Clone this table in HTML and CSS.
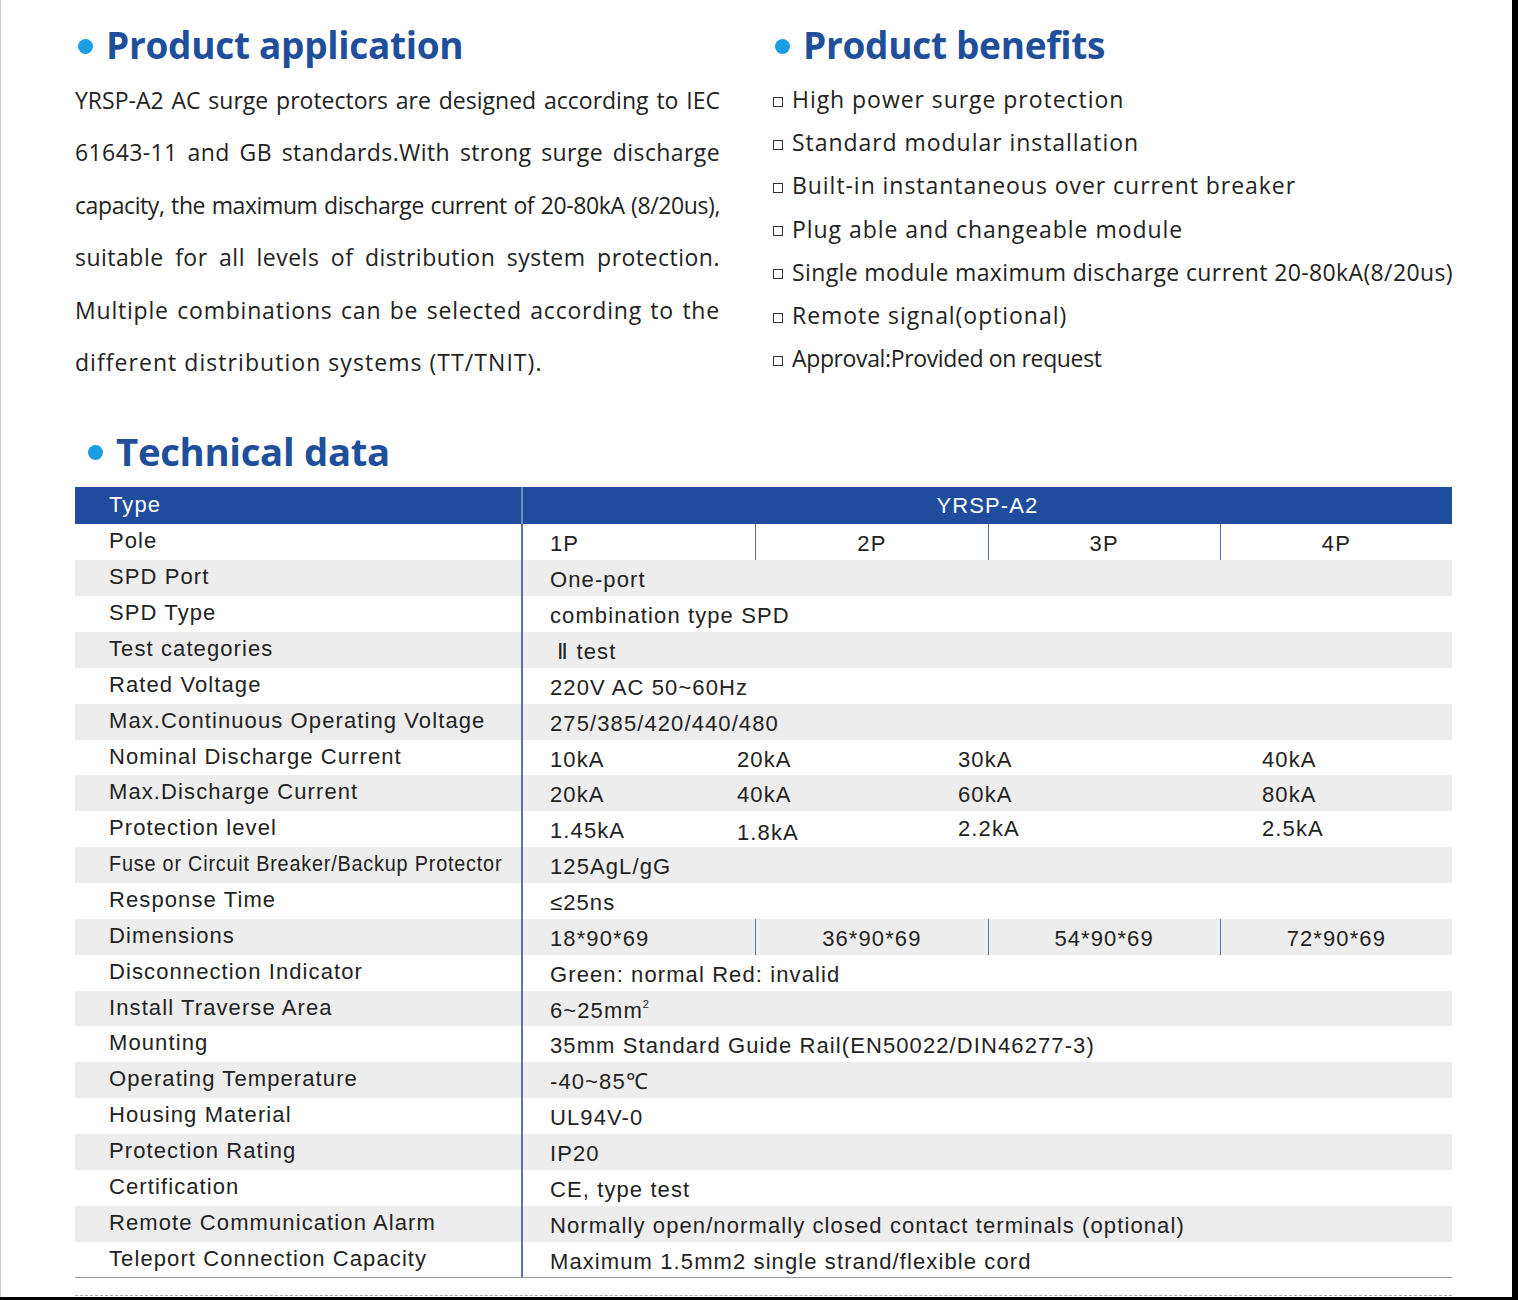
FILE: index.html
```html
<!DOCTYPE html>
<html lang="en">
<head>
<meta charset="utf-8">
<title>YRSP-A2</title>
<link rel="stylesheet" href="styles.css">
</head>
<body>
<div class="page">
  <div class="top">
    <section class="col app">
      <h2 class="heading"><span class="dot"></span>Product application</h2>
      <p class="para">
        <span class="ln l1">YRSP-A2 AC surge protectors are designed according to IEC</span>
        <span class="ln l2">61643-11 and GB standards.With strong surge discharge</span>
        <span class="ln l3">capacity, the maximum discharge current of 20-80kA (8/20us),</span>
        <span class="ln l4">suitable for all levels of distribution system protection.</span>
        <span class="ln l5">Multiple combinations can be selected according to the</span>
        <span class="ln l6">different distribution systems (TT/TNIT).</span>
      </p>
    </section>
    <section class="col benefits">
      <h2 class="heading"><span class="dot"></span>Product benefits</h2>
      <ul class="list">
        <li><span class="box"></span>High power surge protection</li>
        <li><span class="box"></span>Standard modular installation</li>
        <li><span class="box"></span>Built-in instantaneous over current breaker</li>
        <li><span class="box"></span>Plug able and changeable module</li>
        <li><span class="box"></span><span class="tight">Single module maximum discharge current 20-80kA(8/20us)</span></li>
        <li><span class="box"></span>Remote signal(optional)</li>
        <li><span class="box"></span><span class="tight2">Approval:Provided on request</span></li>
      </ul>
    </section>
  </div>

  <h2 class="heading tech"><span class="dot"></span>Technical data</h2>

  <div class="table">
    <div class="row head"><div class="lab">Type</div><div class="val center">YRSP-A2</div></div>
    <div class="row"><div class="lab">Pole</div><div class="val quad"><span class="q first">1P</span><span class="q">2P</span><span class="q">3P</span><span class="q">4P</span></div></div>
    <div class="row alt"><div class="lab">SPD Port</div><div class="val">One-port</div></div>
    <div class="row"><div class="lab">SPD Type</div><div class="val">combination type SPD</div></div>
    <div class="row alt"><div class="lab">Test categories</div><div class="val">&nbsp;Ⅱ test</div></div>
    <div class="row"><div class="lab">Rated Voltage</div><div class="val">220V AC 50~60Hz</div></div>
    <div class="row alt"><div class="lab">Max.Continuous Operating Voltage</div><div class="val">275/385/420/440/480</div></div>
    <div class="row"><div class="lab">Nominal Discharge Current</div><div class="val multi"><span class="m1">10kA</span><span class="m2">20kA</span><span class="m3">30kA</span><span>40kA</span></div></div>
    <div class="row alt"><div class="lab">Max.Discharge Current</div><div class="val multi"><span class="m1">20kA</span><span class="m2">40kA</span><span class="m3">60kA</span><span>80kA</span></div></div>
    <div class="row"><div class="lab">Protection level</div><div class="val multi"><span class="m1">1.45kA</span><span class="m2 low">1.8kA</span><span class="m3 high">2.2kA</span><span class="high">2.5kA</span></div></div>
    <div class="row alt"><div class="lab"><span class="condensed">Fuse or Circuit Breaker/Backup Protector</span></div><div class="val">125AgL/gG</div></div>
    <div class="row"><div class="lab">Response Time</div><div class="val">≤25ns</div></div>
    <div class="row alt"><div class="lab">Dimensions</div><div class="val quad"><span class="q first">18*90*69</span><span class="q">36*90*69</span><span class="q">54*90*69</span><span class="q">72*90*69</span></div></div>
    <div class="row"><div class="lab">Disconnection Indicator</div><div class="val">Green: normal Red: invalid</div></div>
    <div class="row alt"><div class="lab">Install Traverse Area</div><div class="val">6~25mm<sup>2</sup></div></div>
    <div class="row"><div class="lab">Mounting</div><div class="val">35mm Standard Guide Rail(EN50022/DIN46277-3)</div></div>
    <div class="row alt"><div class="lab">Operating Temperature</div><div class="val">-40~85℃</div></div>
    <div class="row"><div class="lab">Housing Material</div><div class="val">UL94V-0</div></div>
    <div class="row alt"><div class="lab">Protection Rating</div><div class="val">IP20</div></div>
    <div class="row"><div class="lab">Certification</div><div class="val">CE, type test</div></div>
    <div class="row alt"><div class="lab">Remote Communication Alarm</div><div class="val">Normally open/normally closed contact terminals (optional)</div></div>
    <div class="row last"><div class="lab">Teleport Connection Capacity</div><div class="val">Maximum 1.5mm2 single strand/flexible cord</div></div>
  </div>
  <div class="dashes"></div>
</div>
</body>
</html>
```

FILE: styles.css
```css
html, body {
  margin: 0;
  padding: 0;
}
body {
  background: #000;
  width: 1518px;
  height: 1300px;
  overflow: hidden;
}
.page {
  width: 1512px;
  height: 1297px;
  background: #fff;
  border-left: 1px solid #c8c8c8;
  box-sizing: border-box;
  padding: 0 0 0 74px;
  color: #222;
}
.top {
  display: flex;
  padding-top: 26px;
}
.col.app {
  width: 645px;
  flex: none;
}
.col.benefits {
  margin-left: 52px;
}
.heading {
  margin: 0;
  font-family: "Open Sans", "Noto Sans", sans-serif;
  font-weight: 700;
  font-size: 37px;
  line-height: 38px;
  color: #1f4e9b;
  display: flex;
  align-items: center;
  letter-spacing: -0.3px;
}
.dot {
  width: 15px;
  height: 15px;
  border-radius: 50%;
  background: #1a9de2;
  margin: 3px 13px 0 3px;
  flex: none;
}
.para {
  margin: 10px 0 0 0;
  font-family: "Open Sans", "Noto Sans", sans-serif;
  font-size: 23px;
  line-height: 52.4px;
  color: #222;
}
.ln {
  display: block;
  text-align: justify;
  text-align-last: justify;
}
.l1 { letter-spacing: 0; }
.l2 { letter-spacing: 0.4px; }
.l3 { letter-spacing: -0.4px; }
.l4 { letter-spacing: 0.5px; }
.l5 { letter-spacing: 0.8px; }
.l6 { letter-spacing: 1.05px; text-align: left; text-align-last: left; }
.list {
  list-style: none;
  margin: 14px 0 0 0;
  padding: 0;
  font-family: "Open Sans", "Noto Sans", sans-serif;
  font-size: 23px;
  line-height: 43.2px;
  letter-spacing: 0.95px;
  color: #222;
}
.list li {
  display: flex;
  align-items: center;
  white-space: nowrap;
}
.box {
  width: 8px;
  height: 8px;
  border: 1.3px solid #333;
  margin: 4px 9px 0 1px;
  flex: none;
}
.tight { letter-spacing: 0.38px; }
.tight2 { letter-spacing: -0.37px; }

.tech {
  margin: 43px 0 0 12px;
  font-size: 38.3px;
  line-height: 40px;
}
.tech .dot {
  margin-left: 1px;
}

.table {
  margin-top: 16px;
  width: 1377px;
  font-family: "Liberation Sans", Arial, sans-serif;
  font-size: 22px;
  letter-spacing: 1.1px;
  color: #222;
  border-bottom: 1.5px solid #999;
}
.row {
  display: grid;
  grid-template-columns: 448px 929px;
  height: 35.86px;
  background: #fff;
}
.row.alt {
  background: #ededed;
}
.row.head {
  background: #1f4c9c;
  color: #fff;
  height: 37px;
}
.lab {
  padding: 4px 0 0 34px;
  border-right: 2px solid #5c72a6;
  white-space: nowrap;
  line-height: 26px;
}
.head .lab {
  border-right-color: #6f8bc4;
  padding-top: 5px;
}
.val {
  padding: 7px 0 0 27px;
  white-space: nowrap;
  line-height: 26px;
}
.head .val {
  padding-top: 6px;
}
.val.center {
  text-align: center;
  padding-left: 0;
}
.val.quad {
  display: grid;
  grid-template-columns: repeat(4, 1fr);
  padding: 0;
}
.q {
  text-align: center;
  border-left: 1.5px solid #5c72a6;
  padding-top: 7px;
}
.q.first {
  text-align: left;
  padding-left: 27px;
  border-left: none;
}
.val.multi {
  display: flex;
}
.m1 { width: 187px; }
.m2 { width: 221px; }
.m3 { width: 304px; }
.low { position: relative; top: 2px; }
.high { position: relative; top: -2px; }
.condensed {
  display: inline-block;
  letter-spacing: 0.9px;
  transform: scaleX(0.9);
  transform-origin: left center;
}
sup {
  font-size: 11px;
  vertical-align: 10px;
  line-height: 0;
}
.dashes {
  margin-top: 17px;
  width: 1377px;
  border-top: 1px dashed #aaa;
}
```
